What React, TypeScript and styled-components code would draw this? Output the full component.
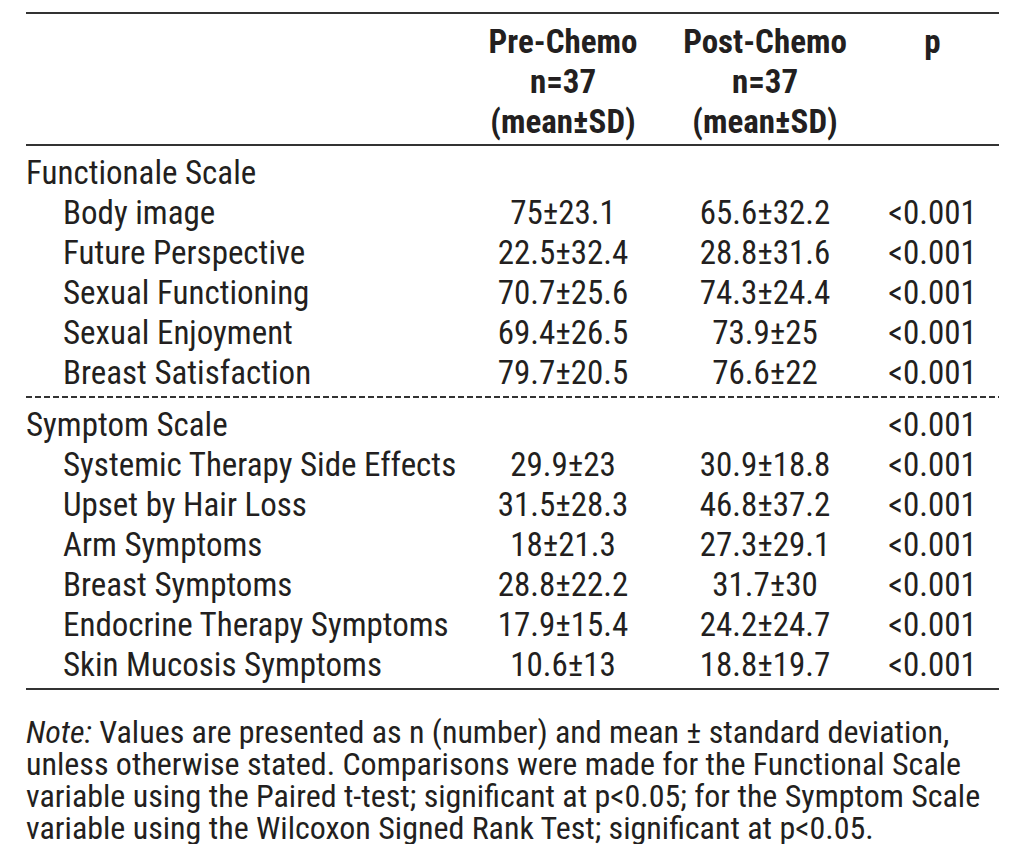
import React from "react";
import styled, { createGlobalStyle } from "styled-components";

interface IRow {
  label: string;
  pre?: string;
  post?: string;
  p?: string;
  section?: boolean;
}

const functional: IRow[] = [
  { label: "Functionale Scale", section: true },
  { label: "Body image", pre: "75±23.1", post: "65.6±32.2", p: "<0.001" },
  { label: "Future Perspective", pre: "22.5±32.4", post: "28.8±31.6", p: "<0.001" },
  { label: "Sexual Functioning", pre: "70.7±25.6", post: "74.3±24.4", p: "<0.001" },
  { label: "Sexual Enjoyment", pre: "69.4±26.5", post: "73.9±25", p: "<0.001" },
  { label: "Breast Satisfaction", pre: "79.7±20.5", post: "76.6±22", p: "<0.001" }
];

const symptom: IRow[] = [
  { label: "Symptom Scale", section: true, p: "<0.001" },
  { label: "Systemic Therapy Side Effects", pre: "29.9±23", post: "30.9±18.8", p: "<0.001" },
  { label: "Upset by Hair Loss", pre: "31.5±28.3", post: "46.8±37.2", p: "<0.001" },
  { label: "Arm Symptoms", pre: "18±21.3", post: "27.3±29.1", p: "<0.001" },
  { label: "Breast Symptoms", pre: "28.8±22.2", post: "31.7±30", p: "<0.001" },
  { label: "Endocrine Therapy Symptoms", pre: "17.9±15.4", post: "24.2±24.7", p: "<0.001" },
  { label: "Skin Mucosis Symptoms", pre: "10.6±13", post: "18.8±19.7", p: "<0.001" }
];

const GlobalStyle = createGlobalStyle`
  body {
    margin: 0;
    background: #ffffff;
    font-family: Roboto, "Liberation Sans", sans-serif;
    font-stretch: 75%;
    font-weight: 400;
    color: #231f20;
  }
`;

const App: React.FC = () => {
  const renderRows = (rows: IRow[]) =>
    rows.map(row => (
      <Row key={row.label}>
        <Label section={row.section}>{row.label}</Label>
        <Cell>{row.pre}</Cell>
        <Cell>{row.post}</Cell>
        <Cell>{row.p}</Cell>
      </Row>
    ));

  return (
    <>
      <GlobalStyle />
      <TableBlock>
        <Head>
          <span />
          <HeadCell>
            Pre-Chemo
            <br />
            n=37
            <br />
            (mean±SD)
          </HeadCell>
          <HeadCell>
            Post-Chemo
            <br />
            n=37
            <br />
            (mean±SD)
          </HeadCell>
          <HeadCell>p</HeadCell>
        </Head>
        <Body>{renderRows(functional)}</Body>
        <Dashed />
        <Body>{renderRows(symptom)}</Body>
        <Note>
          <em>Note:</em> Values are presented as n (number) and mean ± standard deviation,
          <br />
          unless otherwise stated. Comparisons were made for the Functional Scale
          <br />
          variable using the Paired t-test; significant at p&lt;0.05; for the Symptom Scale
          <br />
          variable using the Wilcoxon Signed Rank Test; significant at p&lt;0.05.
        </Note>
      </TableBlock>
    </>
  );
};

const TableBlock = styled.div`
  width: 973px;
  margin: 12px 0 0 26px;
  font-size: 33px;
`;

const grid = `
  display: grid;
  grid-template-columns: 436px 202px 202px 133px;
`;

const Head = styled.div`
  ${grid}
  border-top: 2px solid #333;
  border-bottom: 2px solid #333;
  padding: 8px 0 2px;
`;

const HeadCell = styled.div`
  font-weight: 700;
  text-align: center;
  line-height: 40px;
`;

const Body = styled.div`
  padding: 7px 0 3px;
`;

const Row = styled.div`
  ${grid}
  height: 40px;
  line-height: 40px;
`;

const Label = styled.div<{ section?: boolean }>`
  padding-left: ${props => (props.section ? "0" : "37px")};
  white-space: nowrap;
`;

const Cell = styled.div`
  text-align: center;
  white-space: nowrap;
`;

const Dashed = styled.div`
  height: 2px;
  background: repeating-linear-gradient(
    to right,
    #333 0,
    #333 6px,
    transparent 6px,
    transparent 9px
  );
`;

const Note = styled.p`
  margin: 0;
  padding-top: 26px;
  border-top: 2px solid #333;
  font-size: 32px;
  line-height: 32px;
  white-space: nowrap;
  & > em {
    font-style: italic;
  }
`;

export default App;
